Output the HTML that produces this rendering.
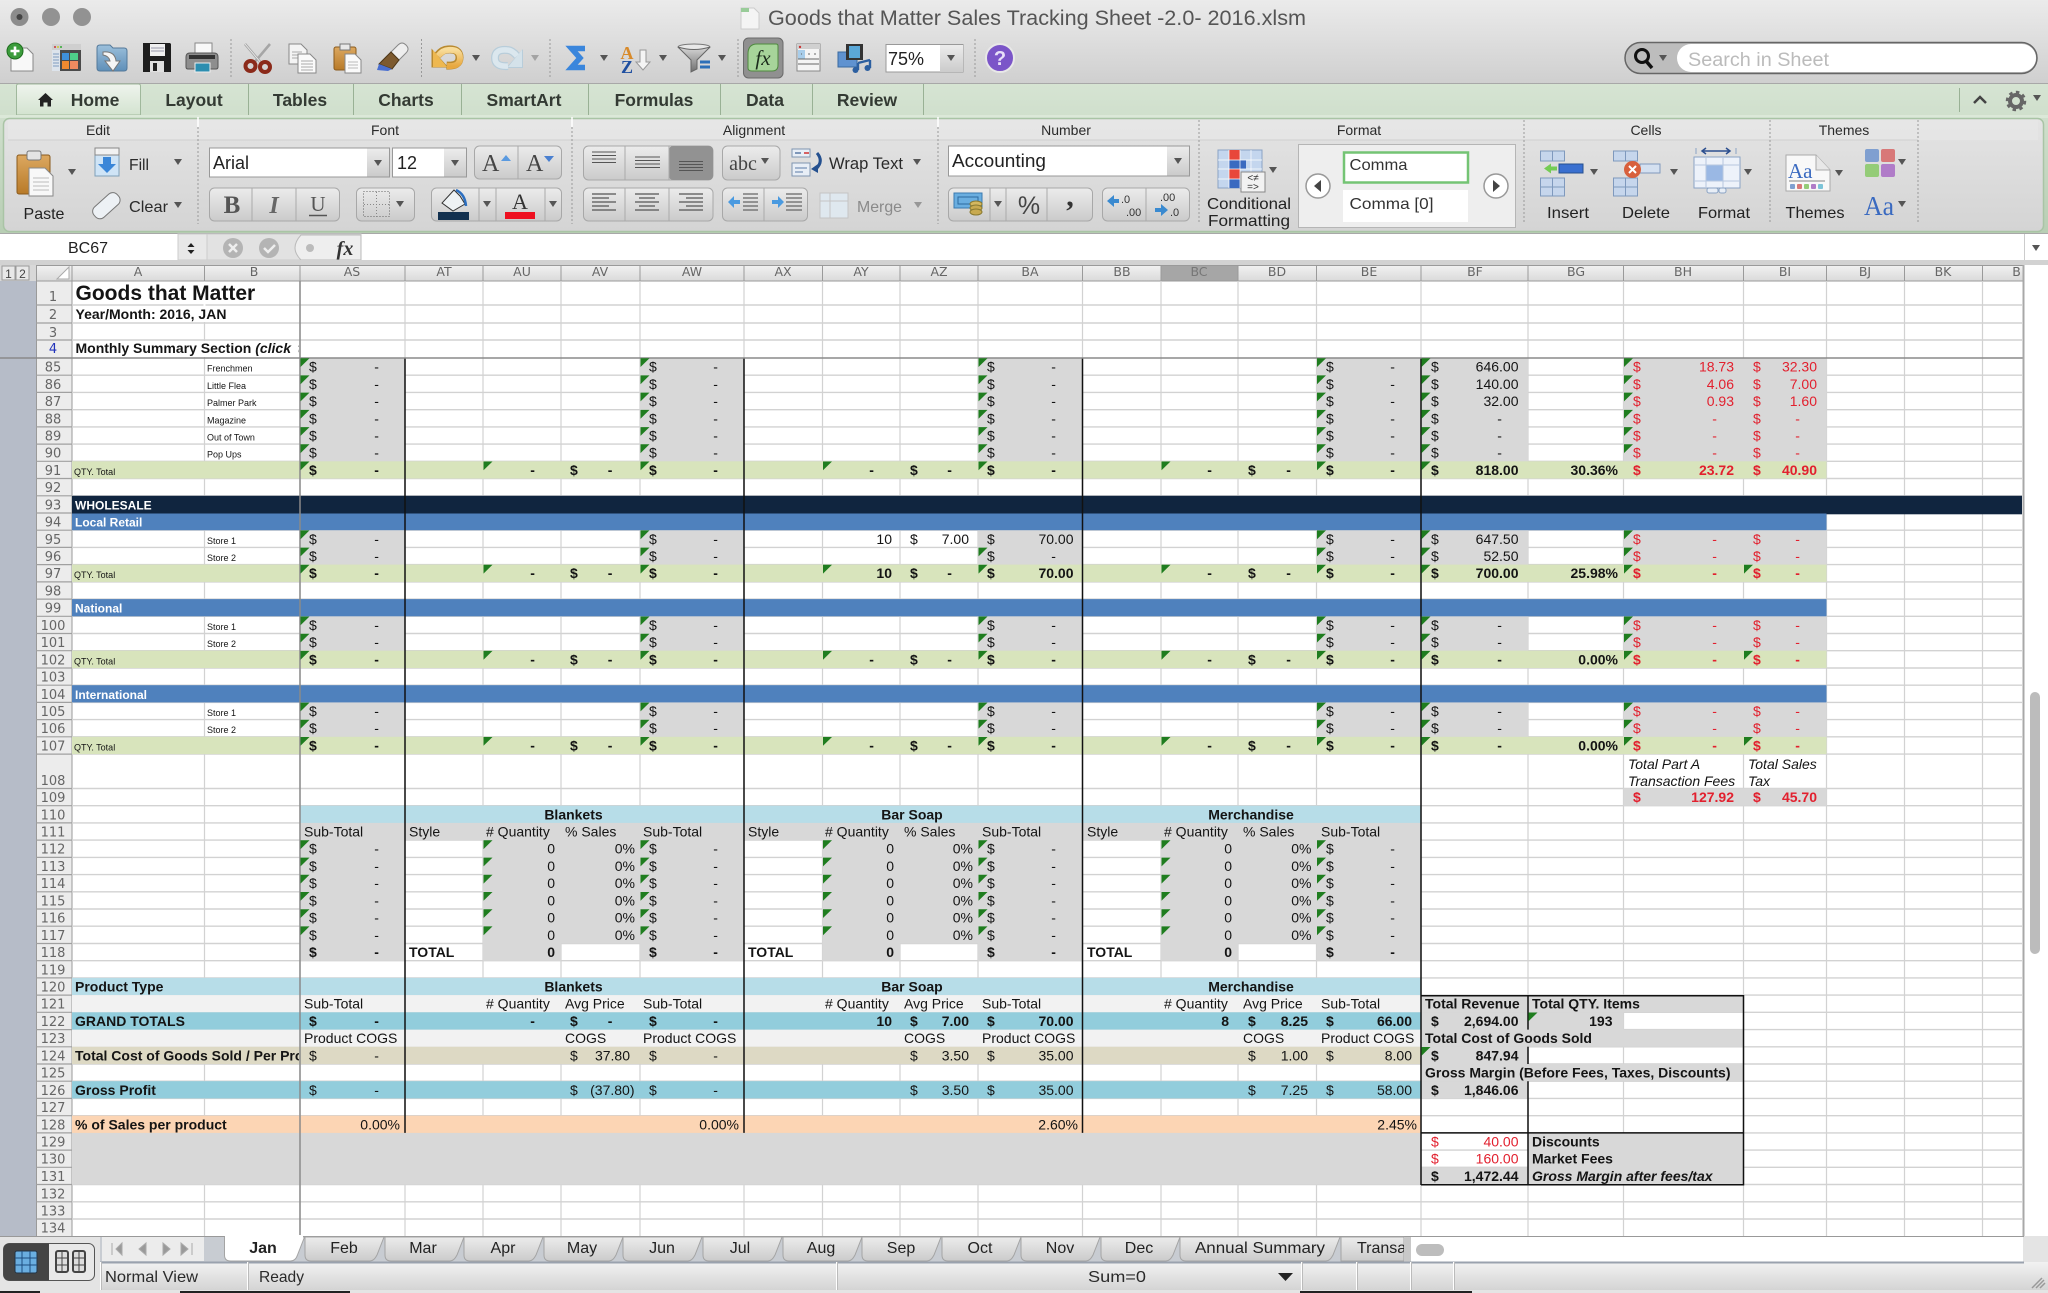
<!DOCTYPE html>
<html lang="en"><head><meta charset="utf-8"><title>Goods that Matter Sales Tracking Sheet</title>
<style>
html,body{margin:0;padding:0;width:2048px;height:1293px;overflow:hidden;background:#fff}
svg{display:block;font:14px "Liberation Sans",Arial,sans-serif;fill:#141414}
.e{text-anchor:end}.m{text-anchor:middle}.b{font-weight:700}.i{font-style:italic}
.r{fill:#e2202e}.s{font-size:9px}.w{fill:#fff;font-weight:700;font-size:12px}
.h{font:13px "DejaVu Sans",sans-serif;fill:#666;text-anchor:middle;font-style:normal}
.c{font:12.5px "DejaVu Sans",sans-serif;fill:#666;text-anchor:middle}
.u{font-size:16px;fill:#2a2a2a}.l{font-size:14px;fill:#2a2a2a;text-anchor:middle}
.tb{font-size:17.5px;font-weight:700;fill:#333a33;text-anchor:middle}
.st{font-size:16px;fill:#222;text-anchor:middle}
.bt{fill:url(#btn);stroke:#a8a8a8}
.ds{stroke:#999;stroke-dasharray:2 2;fill:none}
.gl{stroke:#444;stroke-width:2.5;fill:none}
</style></head><body>
<svg xmlns="http://www.w3.org/2000/svg" width="2048" height="1293" viewBox="0 0 2048 1293">
<defs>
<linearGradient id="top" x1="0" y1="0" x2="0" y2="1"><stop offset="0" stop-color="#ebebeb"/><stop offset="1" stop-color="#cfcfcf"/></linearGradient>
<linearGradient id="tabs" x1="0" y1="0" x2="0" y2="1"><stop offset="0" stop-color="#d6e4d3"/><stop offset="1" stop-color="#b8ceb4"/></linearGradient>
<linearGradient id="home" x1="0" y1="0" x2="0" y2="1"><stop offset="0" stop-color="#eff4ed"/><stop offset="1" stop-color="#d3e3d0"/></linearGradient>
<linearGradient id="rib" x1="0" y1="0" x2="0" y2="1"><stop offset="0" stop-color="#e4e4e4"/><stop offset="1" stop-color="#d4d4d4"/></linearGradient>
<linearGradient id="btn" x1="0" y1="0" x2="0" y2="1"><stop offset="0" stop-color="#ececec"/><stop offset="1" stop-color="#cbcbcb"/></linearGradient>
<linearGradient id="hd" x1="0" y1="0" x2="0" y2="1"><stop offset="0" stop-color="#f2f2f2"/><stop offset="1" stop-color="#dadada"/></linearGradient>
<linearGradient id="sb" x1="0" y1="0" x2="0" y2="1"><stop offset="0" stop-color="#f2f2f2"/><stop offset="1" stop-color="#d4d4d4"/></linearGradient>
<linearGradient id="fun" x1="0" y1="0" x2="0" y2="1"><stop offset="0" stop-color="#d8d8d8"/><stop offset="1" stop-color="#6f6f6f"/></linearGradient>
<linearGradient id="ora" x1="0" y1="0" x2="0" y2="1"><stop offset="0" stop-color="#f8dc9a"/><stop offset="1" stop-color="#e8a840"/></linearGradient>
<linearGradient id="fold" x1="0" y1="0" x2="0" y2="1"><stop offset="0" stop-color="#9cc0dc"/><stop offset="1" stop-color="#5f8fb8"/></linearGradient>
<linearGradient id="cb" x1="0" y1="0" x2="0" y2="1"><stop offset="0" stop-color="#dca860"/><stop offset="1" stop-color="#b87a28"/></linearGradient>
<clipPath id="cA"><rect x="72" y="281" width="227" height="900"/></clipPath>
<clipPath id="cH"><rect x="1982" y="264" width="38" height="18"/></clipPath>
<clipPath id="cT"><rect x="1340" y="1236" width="64" height="28"/></clipPath>
<path id="t" d="M0-13.4h9L0-4.6z" fill="#1f7d1f"/>
<g id="t6"><use href="#t" x="300.5"/><use href="#t" x="640.5"/><use href="#t" x="978.5"/><use href="#t" x="1317"/><use href="#t" x="1421.5"/><use href="#t" x="1624"/></g>
<g id="t8"><use href="#t" x="300.5"/><use href="#t" x="483.5"/><use href="#t" x="640.5"/><use href="#t" x="823"/><use href="#t" x="978.5"/><use href="#t" x="1161.5"/><use href="#t" x="1317"/><use href="#t" x="1421.5"/></g>
<g id="t7"><use href="#t" x="300.5"/><use href="#t" x="483.5"/><use href="#t" x="640.5"/><use href="#t" x="823"/><use href="#t" x="978.5"/><use href="#t" x="1161.5"/><use href="#t" x="1317"/></g>
<path id="dn" d="M-4-3H4L0 3z" fill="#555"/>
<g id="ua"><path d="M447 66q13 1 13-8t-12-8q-5 0-10 6" fill="none" stroke="currentColor" stroke-width="8"/><path d="M432 49v19h17z" fill="currentColor"/></g>
</defs>

<!-- title & toolbar -->
<rect width="2048" height="84" fill="url(#top)"/>
<circle cx="19.5" cy="17" r="9" fill="#8c8c8c"/><circle cx="19.5" cy="17" r="3" fill="#444"/>
<circle cx="51" cy="17" r="9" fill="#929292"/><circle cx="82" cy="17" r="9" fill="#929292"/>
<path d="M741 8h13l5 5v16h-18z" fill="#f4f4f4" stroke="#ccc"/><rect x="741" y="8" width="8" height="4" fill="#9c9"/>
<text x="768" y="25" font-size="21" fill="#555" textLength="538" lengthAdjust="spacingAndGlyphs">Goods that Matter Sales Tracking Sheet -2.0- 2016.xlsm</text>

<!-- new -->
<path d="M11 48h16l6 6v17H11z" fill="#f8f8f8" stroke="#888"/><circle cx="15" cy="51" r="8" fill="#3c9c3c" stroke="#1d6d1d"/><path d="M15 46.500v9M10.500 51h9" stroke="#fff" stroke-width="2.600"/>
<!-- gallery -->
<rect x="52" y="44" width="29" height="27" fill="#4a4a4a" rx="1"/><rect x="52" y="44" width="29" height="6" fill="#cfcfcf"/><circle cx="55" cy="47" r="1" fill="#c33"/><circle cx="58" cy="47" r="1" fill="#cc3"/><circle cx="61" cy="47" r="1" fill="#3a3"/><rect x="52" y="50" width="8" height="21" fill="#dde4ec"/><path d="M53 54h6M53 57h6M53 60h6M53 63h6M53 66h6" stroke="#7e9cc0"/><rect x="62" y="53" width="7" height="7" fill="#3f8fd8"/><rect x="70" y="53" width="8" height="7" fill="#4ed08a"/><rect x="62" y="61" width="7" height="8" fill="#f08a30"/><rect x="70" y="61" width="8" height="8" fill="#ee8a60"/>
<!-- open -->
<path d="M97 48q0-3 3-3h10l3 3h11q3 0 3 3v17q0 3-3 3H100q-3 0-3-3z" fill="url(#fold)" stroke="#54799a"/><path d="M103 52q12-1 13 9h4l-7 10-8-10h5q-1-5-7-6z" fill="#f5f5f5" stroke="#777"/>
<!-- save -->
<path d="M143 43h27l1 1v28h-28z" fill="#1e1e1e"/><rect x="150" y="44" width="15" height="12" fill="#f0f0f0"/><path d="M151 48h13M151 51h13" stroke="#99a"/><rect x="150" y="61" width="14" height="11" fill="#e0e0e0"/><rect x="153" y="63" width="4" height="8" fill="#222"/>
<!-- print -->
<rect x="195" y="43" width="17" height="12" fill="#f8f8f8" stroke="#888"/><path d="M186 57q0-4 4-4h24q4 0 4 4v10q0 2-2 2h-28q-2 0-2-2z" fill="#8e8e8e" stroke="#555"/><rect x="189" y="55" width="26" height="4" fill="#333"/><rect x="195" y="63" width="15" height="9" fill="#2c8eb0" stroke="#eee"/>
<!-- cut -->
<path d="M245 44l17 20M270 44l-17 20" stroke="#a6a6a6" stroke-width="2.600"/><path d="M245 44l17 20" stroke="#eee" stroke-width=".8"/><circle cx="250.500" cy="66" r="5" fill="none" stroke="#8b2a1a" stroke-width="4"/><circle cx="265" cy="67" r="5" fill="none" stroke="#8b2a1a" stroke-width="4"/>
<!-- copy -->
<path d="M289 44h12l6 6v14h-18z" fill="#f4f4f4" stroke="#888"/><path d="M292 52h10M292 55h10M292 58h10" stroke="#aaa"/><path d="M298 54h12l6 6v13h-18z" fill="#fafafa" stroke="#888"/><path d="M301 61h12M301 64h12M301 67h12M301 70h12" stroke="#aaa"/>
<!-- paste -->
<rect x="334" y="47" width="22" height="23" rx="2" fill="url(#cb)" stroke="#8a5a1c"/><rect x="340" y="44" width="10" height="6" fill="#e8e8e8" stroke="#777"/><path d="M345 54h10l6 6v13h-16z" fill="#fafafa" stroke="#888"/><path d="M348 62h10M348 65h10M348 68h10" stroke="#bbb"/>
<!-- brush -->
<path d="M398 45q4-4 8 0t0 8l-7 7-8-8z" fill="#eeeeee" stroke="#888"/><path d="M391 52l8 8-7 9-13-5z" fill="#7d5a2f" stroke="#4d3617"/><path d="M379 64l13 5-4 2-11-1z" fill="#4a6fd0"/>
<!-- undo/redo -->
<g color="#b98a30" transform="translate(-.5 -.5) scale(1)"><use href="#ua"/></g>
<g color="#f0c068"><path d="M447 66q13 1 13-8t-12-8q-5 0-10 6" fill="none" stroke="url(#ora)" stroke-width="6"/><path d="M433 50v17h14z" fill="#eeb850"/></g>
<use href="#dn" x="476" y="58" style="fill:#222"/>
<g color="#b8cdda" transform="translate(955 0) scale(-1 1)"><use href="#ua"/></g>
<g transform="translate(955 0) scale(-1 1)"><path d="M447 66q13 1 13-8t-12-8q-5 0-10 6" fill="none" stroke="#dbe7ee" stroke-width="5.500"/><path d="M433 50v17h14z" fill="#d4e2ea"/></g>
<use href="#dn" x="535" y="58" opacity=".4"/>
<!-- sum -->
<path d="M585 48.500H571.500L580 58 571.500 67.500H585" fill="none" stroke="#3a86dc" stroke-width="5.500"/><use href="#dn" x="604" y="58"/>
<!-- sort -->
<text x="627" y="59" class="m b" font-family="Liberation Serif" font-size="18" fill="#d88a2a">A</text><text x="627" y="73" class="m b" font-family="Liberation Serif" font-size="18" fill="#1f4fa0">Z</text><path d="M640 50h6v12h4l-7 8-7-8h4z" fill="#f4f4f4" stroke="#999"/><use href="#dn" x="663" y="58"/>
<!-- filter -->
<ellipse cx="694" cy="47" rx="16" ry="3" fill="#e8e8e8" stroke="#777"/><path d="M678 47q16 5 32 0l-13 13v9l-6 3V60z" fill="url(#fun)" stroke="#666"/><path d="M700 62h10M700 67h10" stroke="#2c6fb8" stroke-width="3"/><use href="#dn" x="722" y="58"/>
<path class="ds" d="M231 39v39M421.500 39v39M550 39v39M738 39v39M975 39v39"/>
<!-- fx -->
<rect x="743.500" y="38" width="39.500" height="40" rx="5" fill="#909090" stroke="#6a6a6a"/><path d="M757 44h19q2 0 2 2v19q0 6-6 6h-20q-4 0-4-3V54q0-10 9-10z" fill="#a7d49a" stroke="#4f8a3f"/><text x="763" y="65" class="m i" font-family="Liberation Serif" font-size="21" fill="#1c2c1c">fx</text>
<!-- toolbox -->
<rect x="797" y="44" width="23" height="27" fill="#f4f4f4" stroke="#888"/><rect x="797" y="44" width="23" height="5" fill="#d0d0d0"/><circle cx="800" cy="47" r="1.200" fill="#c33"/><rect x="798" y="50" width="7" height="9" fill="#a8cdea"/><path d="M801 54h1M808 54h2M814 54h2M798 59h21M798 64h21" stroke="#666"/>
<!-- media -->
<rect x="838" y="52" width="19" height="15" fill="#5f92d0" stroke="#3a6aa0"/><rect x="846" y="44" width="17" height="16" fill="#333"/><rect x="849" y="46" width="11" height="12" fill="#5aa8d8"/><path d="M858 63v7M870 60v8M858 63l12-3" stroke="#2c5fa0" stroke-width="2.400" fill="none"/><circle cx="855.500" cy="70" r="3" fill="#2c5fa0"/><circle cx="867.500" cy="68" r="3" fill="#2c5fa0"/>
<!-- zoom box -->
<rect x="886" y="44.500" width="77" height="27.500" fill="#fff" stroke="#999"/><rect x="940" y="45" width="23" height="27" fill="url(#btn)"/><use href="#dn" x="951" y="58"/><text x="888" y="65" font-size="18" fill="#222">75%</text>
<!-- help -->
<circle cx="1000" cy="58" r="14" fill="#7b55c8" stroke="#e8e8e8" stroke-width="2"/><text x="1000" y="65" class="m b" font-size="20" fill="#e8e0f8">?</text>
<!-- search -->
<rect x="1625" y="42.500" width="412" height="31" rx="15.500" fill="#bdbdbd" stroke="#666" stroke-width="1.500"/><rect x="1677" y="44" width="359" height="28" rx="14" fill="#fff"/><circle cx="1642" cy="56" r="6.500" fill="none" stroke="#111" stroke-width="3"/><path d="M1646 61l6 7" stroke="#111" stroke-width="3.500"/><use href="#dn" x="1663" y="58"/>
<text x="1688" y="66" font-size="19" fill="#bbb" textLength="141" lengthAdjust="spacingAndGlyphs">Search in Sheet</text>

<!-- ribbon tabs -->
<rect y="83" width="2048" height="150" fill="url(#tabs)"/><path d="M0 83.500H2048" stroke="#a8a8a8"/>
<path d="M16.500 115V86q0-2 2-2h120q2 0 2 2v29z" fill="url(#home)" stroke="#a0b89c"/>
<path d="M38 100l7.500-7 7.500 7h-2v6.500h-3.500v-4h-4v4H40v-6.500z" fill="#222"/>
<text x="95" y="106" class="tb">Home</text><text x="194" y="106" class="tb">Layout</text><text x="300" y="106" class="tb">Tables</text><text x="406" y="106" class="tb">Charts</text><text x="524" y="106" class="tb">SmartArt</text><text x="654" y="106" class="tb">Formulas</text><text x="765" y="106" class="tb">Data</text><text x="867" y="106" class="tb">Review</text>
<path d="M248.500 84v31M353.500 84v31M461.500 84v31M588.500 84v31M720.500 84v31M812.500 84v31M923.500 84v31M1959.500 88v24" stroke="#99b195"/>
<path d="M1974 103l6-6 6 6" class="gl"/>
<circle cx="2016" cy="101" r="6" fill="none" stroke="#666" stroke-width="4"/><circle cx="2016" cy="101" r="9" fill="none" stroke="#666" stroke-width="2.500" stroke-dasharray="3.500 3.500"/><use href="#dn" x="2037" y="98"/>
<rect y="115" width="2048" height="3" fill="#dbe8d8"/>
<rect x="3.500" y="118.500" width="2040" height="113" rx="6" fill="url(#rib)" stroke="#a9c4a5" stroke-width="1.500"/>
<rect x="8" y="120" width="2030" height="20" fill="#e8e8e8" opacity=".6"/><path d="M8 140H1918" stroke="#cfcfcf"/>
<path d="M198 127v97M572 127v97M938 127v97M1199 120v104M1524 120v104M1770 120v104M1918 120v104" class="ds"/>
<path d="M198 117v10M572 117v10M938 117v10" stroke="#fff" stroke-width="1.500"/>
<text x="98" y="135" class="l">Edit</text><text x="385" y="135" class="l">Font</text><text x="754" y="135" class="l">Alignment</text><text x="1066" y="135" class="l">Number</text><text x="1359" y="135" class="l">Format</text><text x="1646" y="135" class="l">Cells</text><text x="1844" y="135" class="l">Themes</text>

<!-- edit -->
<rect x="17" y="155" width="33" height="39" rx="2" fill="url(#cb)" stroke="#8a5a1c"/><rect x="27" y="151" width="14" height="9" rx="2" fill="#e4e4e4" stroke="#777"/><path d="M29 168h16l8 8v20H29z" fill="#f8f8f8" stroke="#888"/><path d="M33 178h16M33 182h16M33 186h16M33 190h16" stroke="#bbb"/>
<use href="#dn" x="72" y="172"/><text x="44" y="219" class="st m">Paste</text>
<rect x="95" y="148" width="24" height="28" fill="#cfe4f6" stroke="#7fa0b8"/><rect x="95" y="148" width="24" height="7" fill="#f2f2f2" stroke="#888"/><path d="M103 157h8v7h5l-9 9-9-9h5z" fill="#3a86d8"/><text x="129" y="170" class="u" textLength="20" lengthAdjust="spacingAndGlyphs">Fill</text><use href="#dn" x="178" y="162"/>
<rect x="91" y="199" width="31" height="14" rx="6" transform="rotate(-42 106 206)" fill="#edf1f5" stroke="#777"/><text x="129" y="212" class="u" textLength="39" lengthAdjust="spacingAndGlyphs">Clear</text><use href="#dn" x="178" y="205"/>
<!-- font -->
<rect x="209.500" y="148" width="180" height="29" fill="#fff" stroke="#999"/><rect x="367" y="148.500" width="22" height="28" fill="url(#btn)"/><use href="#dn" x="378" y="163"/><text x="213" y="169" font-size="18" fill="#222" textLength="36" lengthAdjust="spacingAndGlyphs">Arial</text>
<rect x="392.500" y="148" width="74" height="29" fill="#fff" stroke="#999"/><rect x="444" y="148.500" width="22" height="28" fill="url(#btn)"/><use href="#dn" x="455" y="163"/><text x="397" y="169" font-size="18" fill="#222">12</text>
<rect x="474.500" y="146" width="87" height="33" rx="5" class="bt"/><path d="M518 146v33" stroke="#aaa"/>
<text x="482" y="171" font-family="Liberation Serif" font-size="24" fill="#444">A</text><path d="M501 161l5-6 5 6z" fill="#5a9ae0"/><text x="526" y="171" font-family="Liberation Serif" font-size="24" fill="#444">A</text><path d="M544 156l5 6 5-6z" fill="#4a80d0"/>
<rect x="209.500" y="188" width="130" height="33" rx="5" class="bt"/><path d="M252 188v33M296 188v33" stroke="#aaa"/>
<text x="232" y="213" class="m b" font-family="Liberation Serif" font-size="25" fill="#555">B</text><text x="274" y="213" class="m i b" font-family="Liberation Serif" font-size="24" fill="#666">I</text><text x="318" y="211" class="m" font-family="Liberation Serif" font-size="21" fill="#555">U</text><path d="M309 215.500h18" stroke="#555" stroke-width="1.500"/>
<rect x="356.500" y="188" width="58" height="33" rx="5" class="bt"/><rect x="363.500" y="191.500" width="26" height="25" fill="none" stroke="#666" stroke-dasharray="1 2"/><path d="M376.500 192v25M364 204.500h26" stroke="#888" stroke-dasharray="1 2"/><use href="#dn" x="400" y="204"/>
<rect x="431.500" y="188" width="130" height="33" rx="5" class="bt"/><path d="M479 188v33M496 188v33M545 188v33" stroke="#aaa"/>
<path d="M454 190l6 6 5 8-12 7-11-8z" fill="#eef2f4" stroke="#333"/><path d="M456 190q9 4 10 16" fill="none" stroke="#2c6fc0" stroke-width="2.500"/><rect x="438" y="212" width="31" height="8" fill="#12304f"/><use href="#dn" x="487" y="204"/>
<text x="520" y="209" class="m" font-family="Liberation Serif" font-size="22" fill="#333">A</text><rect x="505" y="212" width="30" height="7" fill="#ee1020"/><use href="#dn" x="553" y="204"/>
<!-- alignment -->
<rect x="583.500" y="146" width="129.500" height="34" rx="5" class="bt"/><rect x="669" y="146" width="44" height="34" rx="4" fill="#929292"/><path d="M625 146v34M669 146v34" stroke="#aaa"/>
<path d="M592 152h24M592 155.500h24M592 159h24M592 162.500h24M635 157h25M635 160.500h25M635 164h25M635 167.500h25M679 161.500h24M679 164.500h24M679 167.500h24M679 170.500h24" stroke="#555"/>
<rect x="722.500" y="146" width="57.500" height="34" rx="5" class="bt"/><text x="743" y="170" class="m" font-family="Liberation Serif" font-size="20" fill="#444">abc</text><use href="#dn" x="765" y="161"/>
<rect x="792" y="149" width="18" height="8" fill="#e8eef6" stroke="#7f95b0"/><rect x="792" y="163" width="18" height="13" fill="#e8eef6" stroke="#7f95b0"/><path d="M795 153h6" stroke="#5a7aa5" stroke-width="1.500"/><path d="M804 153h5" stroke="#d03030" stroke-width="1.500"/><path d="M795 168h12M795 172h8" stroke="#5a7aa5"/><path d="M817 153q7 8-1 16" fill="none" stroke="#24508f" stroke-width="3"/><path d="M811 169l7-5v9z" fill="#24508f"/>
<text x="829" y="169" class="u" font-size="17" style="font-size:17px" textLength="74" lengthAdjust="spacingAndGlyphs">Wrap Text</text><use href="#dn" x="917" y="162"/>
<rect x="583.500" y="188" width="129.500" height="33" rx="5" class="bt"/><path d="M625 188v33M669 188v33" stroke="#aaa"/>
<path d="M592 194h24M592 198h17M592 202h24M592 206h17M592 210h24M635 194h24M639 198h16M635 202h24M639 206h16M635 210h24M679 194h24M686 198h17M679 202h24M686 206h17M679 210h24" stroke="#555" stroke-width="1.300"/>
<rect x="722.500" y="188" width="85" height="33" rx="5" class="bt"/><path d="M764 188v33" stroke="#aaa"/>
<path d="M743 194h15M743 198h15M743 202h15M743 206h15M743 210h15M786 194h16M786 198h16M786 202h16M786 206h16M786 210h16" stroke="#666" stroke-width="1.200"/><path d="M728 202l6-6v4h6v4h-6v4zM784 202l-6-6v4h-6v4h6v4z" fill="#4a9ae0"/>
<rect x="820" y="193" width="28" height="25" fill="#dfe8ef" stroke="#c4c4c4"/><path d="M820 201h28M830 193v25" stroke="#c4c4c4"/>
<text x="857" y="212" style="font-size:16px;fill:#8a8a8a" textLength="45" lengthAdjust="spacingAndGlyphs">Merge</text><use href="#dn" x="918" y="205" opacity=".5"/>
<!-- number -->
<rect x="948.500" y="146" width="241" height="30" fill="#fff" stroke="#999"/><rect x="1167" y="146.500" width="22" height="29" fill="url(#btn)"/><use href="#dn" x="1178" y="161"/><text x="952" y="167" font-size="18" fill="#222" textLength="94" lengthAdjust="spacingAndGlyphs">Accounting</text>
<rect x="948.500" y="188" width="144" height="33" rx="5" class="bt"/><path d="M990 188v33M1006 188v33M1047 188v33" stroke="#aaa"/>
<rect x="954" y="193" width="28" height="15" fill="#6aaee0" stroke="#3a7ab0"/><path d="M958 197h20v7h-20z" fill="none" stroke="#2c6aa0"/><ellipse cx="976" cy="204" rx="6" ry="3" fill="#d4b860" stroke="#8a7a30"/><ellipse cx="976" cy="208" rx="6" ry="3" fill="#c8aa50" stroke="#8a7a30"/><ellipse cx="976" cy="212" rx="6" ry="3" fill="#c8aa50" stroke="#8a7a30"/><use href="#dn" x="998" y="204"/>
<text x="1029" y="214" class="m" font-size="25" fill="#444">%</text><text x="1070" y="206" class="m b" font-family="Liberation Serif" font-size="30" fill="#333">,</text>
<rect x="1102.500" y="188" width="87" height="33" rx="5" class="bt"/><path d="M1146 188v33" stroke="#aaa"/>
<path d="M1107 201l7-6v4h5v4h-5v4z" fill="#3a8ad0"/><text x="1121" y="203" font-size="11" fill="#333">.0</text><text x="1126" y="216" font-size="11" fill="#333">.00</text>
<text x="1160" y="201" font-size="11" fill="#333">.00</text><path d="M1168 210l-7-6v4h-6v4h6v4z" fill="#3a8ad0"/><text x="1170" y="216" font-size="11" fill="#333">.0</text>
<!-- conditional -->
<rect x="1218" y="150" width="44" height="38" fill="#c4d6ee" stroke="#8aa3c4"/><rect x="1229" y="150" width="11" height="10" fill="#e8473a"/><rect x="1229" y="160" width="17" height="9" fill="#3a6ac0"/><rect x="1229" y="169" width="11" height="10" fill="#e8473a"/><rect x="1229" y="179" width="11" height="9" fill="#3a6ac0"/><path d="M1218 160h44M1218 169h44M1218 179h44M1229 150v38M1240 150v38M1251 150v38" stroke="#fff" stroke-width=".7"/>
<rect x="1241" y="172" width="24" height="20" fill="#f2f2f2" stroke="#888"/><text x="1253" y="181" class="m" font-size="10" fill="#333">&lt;≠</text><text x="1253" y="190" class="m" font-size="10" fill="#333">=&gt;</text><use href="#dn" x="1273" y="170"/>
<text x="1249" y="209" class="st" textLength="84" lengthAdjust="spacingAndGlyphs">Conditional</text><text x="1249" y="226" class="st" textLength="82" lengthAdjust="spacingAndGlyphs">Formatting</text>
<!-- format panel -->
<rect x="1298.500" y="144.500" width="217" height="83" fill="#eeeeee" stroke="#b5b5b5"/>
<rect x="1344" y="152.500" width="124" height="30" fill="#fff" stroke="#74c474" stroke-width="2.500"/><rect x="1343" y="190" width="125" height="32" fill="#fff"/>
<text x="1349.500" y="170" font-size="16" fill="#333" textLength="58" lengthAdjust="spacingAndGlyphs">Comma</text><text x="1349.500" y="209" font-size="16" fill="#333" textLength="84" lengthAdjust="spacingAndGlyphs">Comma [0]</text>
<circle cx="1318" cy="186" r="12" fill="#fff" stroke="#999" stroke-width="1.500"/><path d="M1321 180v12l-7-6z" fill="#444"/><circle cx="1496" cy="186" r="12" fill="#fff" stroke="#999" stroke-width="1.500"/><path d="M1493 180v12l7-6z" fill="#444"/>
<!-- cells -->
<g stroke="#7f99bd" fill="#c6d6ec"><rect x="1540.500" y="151" width="24" height="10"/><rect x="1540.500" y="178" width="24" height="18"/><path d="M1552.500 151v10M1552.500 178v18M1540 187h24" fill="none"/></g>
<rect x="1559" y="164" width="24" height="9" fill="#3a70d0" stroke="#27508f"/><path d="M1544 168.500l7-5v3h6v4h-6v3z" fill="#74cc54"/><use href="#dn" x="1594" y="172"/>
<g stroke="#7f99bd" fill="#c6d6ec"><rect x="1613.500" y="151" width="24" height="10"/><rect x="1613.500" y="178" width="24" height="18"/><rect x="1640" y="164" width="20" height="9" fill="#d4e0f0"/><path d="M1625.500 151v10M1625.500 178v18M1613 187h24" fill="none"/></g>
<circle cx="1632.500" cy="169.500" r="8.500" fill="#d8603c"/><path d="M1629 166l7 7m0-7l-7 7" stroke="#fff" stroke-width="2"/><use href="#dn" x="1674" y="172"/>
<rect x="1694" y="157" width="46" height="31" fill="#edf2fa" stroke="#8aa3c4"/><rect x="1706" y="165" width="17" height="16" fill="#9ab8e4"/><path d="M1706 157v31M1723 157v31M1694 165h46M1694 181h46" stroke="#b7c7df"/><rect x="1707" y="188" width="11" height="5" rx="2" fill="#e8eef6" stroke="#8aa3c4"/><rect x="1719" y="188" width="7" height="5" rx="2" fill="#e8eef6" stroke="#8aa3c4"/><path d="M1702 151h28M1706 148l-4 3 4 3M1726 148l4 3-4 3" stroke="#2c4f8f" fill="none" stroke-width="1.500"/><path d="M1696 148v6M1736 148v6" stroke="#8aa3c4"/><use href="#dn" x="1748" y="172"/>
<text x="1568" y="218" class="st" textLength="42" lengthAdjust="spacingAndGlyphs">Insert</text><text x="1646" y="218" class="st" textLength="48" lengthAdjust="spacingAndGlyphs">Delete</text><text x="1724" y="218" class="st" textLength="52" lengthAdjust="spacingAndGlyphs">Format</text>
<!-- themes -->
<path d="M1786 155h30l14 15v21h-44z" fill="#f8f8f8" stroke="#aaa"/><path d="M1816 155v15h14" fill="#e8e8e8" stroke="#aaa"/><text x="1788" y="178" font-family="Liberation Serif" font-size="21" fill="#3a6ac0">Aa</text><path d="M1789 181h36" stroke="#aaa" stroke-width="1.500"/><rect x="1790" y="184" width="5" height="5" rx="1" fill="#7f9fd0"/><rect x="1797" y="184" width="5" height="5" rx="1" fill="#d87878"/><rect x="1804" y="184" width="5" height="5" rx="1" fill="#94cc78"/><rect x="1811" y="184" width="5" height="5" rx="1" fill="#b07cc8"/><rect x="1818" y="184" width="5" height="5" rx="1" fill="#7cc4d8"/><use href="#dn" x="1839" y="173"/>
<text x="1815" y="218" class="st" textLength="59" lengthAdjust="spacingAndGlyphs">Themes</text>
<rect x="1865" y="149" width="14" height="13" rx="2" fill="#7f9fd0"/><rect x="1881" y="149" width="14" height="13" rx="2" fill="#d87878"/><rect x="1865" y="164" width="14" height="13" rx="2" fill="#94cc78"/><rect x="1881" y="164" width="14" height="13" rx="2" fill="#b07cc8"/><use href="#dn" x="1902" y="162"/>
<text x="1864" y="215" font-family="Liberation Serif" font-size="27" fill="#3a6ac0" textLength="30" lengthAdjust="spacingAndGlyphs">Aa</text><use href="#dn" x="1902" y="204"/>

<!-- formula bar -->
<rect y="233" width="2048" height="32" fill="#fff"/><path d="M0 233.500H2048" stroke="#a8a8a8"/>
<rect x="178" y="234" width="29" height="26" fill="#e8e8e8" stroke="#ccc"/><path d="M191 243l-3.500 4h7zM191 254l-3.500-4h7z" fill="#222"/>
<rect x="207" y="234" width="154" height="26" fill="#e2e2e2" stroke="#ccc"/>
<circle cx="233" cy="248" r="10" fill="#b4b4b4"/><path d="M229 244l8 8m0-8l-8 8" stroke="#eee" stroke-width="2.500"/><circle cx="269" cy="248" r="10" fill="#b4b4b4"/><path d="M264 248l4 4 7-7" fill="none" stroke="#eee" stroke-width="2.500"/>
<path d="M301 235q-12 13 0 25h60v-25z" fill="#eeeeee" stroke="#bbb"/><circle cx="310" cy="248" r="4" fill="#bbb"/><text x="345" y="255" class="m i b" font-family="Liberation Serif" font-size="20" fill="#333">fx</text>
<text x="88" y="253" class="m" font-size="16" fill="#222">BC67</text>
<path d="M2024.500 234v26" stroke="#ccc"/><use href="#dn" x="2036" y="248"/>
<rect y="260" width="2048" height="5" fill="#d2d2d2"/>

<!-- sheet background -->
<rect x="0" y="265" width="2048" height="972" fill="#fff"/>
<rect x="0" y="281" width="36" height="956" fill="#b6bcc8"/>
<rect x="0" y="265" width="36" height="16" fill="#d8d8d8"/>
<rect x="2" y="266" width="13" height="14" fill="#e8e8e8" stroke="#999"/><rect x="16" y="266" width="13" height="14" fill="#e8e8e8" stroke="#999"/>
<text x="8.500" y="278" class="m" font-size="12" fill="#444">1</text><text x="22.500" y="278" class="m" font-size="12" fill="#444">2</text>
<rect x="36" y="265" width="1987" height="16" fill="url(#hd)"/>
<rect x="36" y="281" width="36" height="955" fill="#ececec"/>
<rect x="1161" y="265" width="77" height="16" fill="#a6a6a6"/>
<path d="M57 279h12v-12z" fill="#fff" stroke="#aaa"/>
<path d="M36.500 265v971M72 265v971M204.500 265v16M300 265v16M405 265v16M483 265v16M561 265v16M640 265v16M744 265v16M822.500 265v16M900 265v16M978 265v16M1082.500 265v16M1161 265v16M1238 265v16M1316.500 265v16M1421 265v16M1528 265v16M1623.500 265v16M1743.500 265v16M1826.500 265v16M1904.500 265v16M1982.500 265v16M36 265.500H2023M36 281H2023" stroke="#9a9a9a"/>
<g>
<text class="c" x="138" y="276">A</text><text class="c" x="254" y="276">B</text><text class="c" x="352" y="276">AS</text><text class="c" x="444" y="276">AT</text><text class="c" x="522" y="276">AU</text><text class="c" x="600" y="276">AV</text><text class="c" x="692" y="276">AW</text><text class="c" x="783" y="276">AX</text><text class="c" x="861" y="276">AY</text><text class="c" x="939" y="276">AZ</text><text class="c" x="1030" y="276">BA</text><text class="c" x="1122" y="276">BB</text><text class="c" x="1199" y="276" style="fill:#777">BC</text><text class="c" x="1277" y="276">BD</text><text class="c" x="1369" y="276">BE</text><text class="c" x="1475" y="276">BF</text><text class="c" x="1576" y="276">BG</text><text class="c" x="1683" y="276">BH</text><text class="c" x="1785" y="276">BI</text><text class="c" x="1865" y="276">BJ</text><text class="c" x="1943" y="276">BK</text><text class="c" x="2020" y="276" clip-path="url(#cH)">BL</text>
</g>

<!-- grid -->
<path fill="none" stroke="#d2d2d2" stroke-width="1.200" d="M204.500 281V1236M300 281V1236M405 281V1236M483 281V1236M561 281V1236M640 281V1236M744 281V1236M822.500 281V1236M900 281V1236M978 281V1236M1082.500 281V1236M1161 281V1236M1238 281V1236M1316.500 281V1236M1421 281V1236M1528 281V1236M1623.500 281V1236M1743.500 281V1236M1826.500 281V1236M1904.500 281V1236M1982.500 281V1236"/>
<path fill="none" stroke="#d2d2d2" stroke-width="1.400" d="M72 305H2022M72 323H2022M72 340H2022M72 375.200H2022M72 392.400H2022M72 409.700H2022M72 426.900H2022M72 444.100H2022M72 461.300H2022M72 478.500H2022M72 495.800H2022M72 513H2022M72 530.200H2022M72 547.400H2022M72 564.600H2022M72 581.900H2022M72 599.100H2022M72 616.300H2022M72 633.500H2022M72 650.700H2022M72 668H2022M72 685.200H2022M72 702.400H2022M72 719.600H2022M72 736.800H2022M72 754.100H2022M72 788.500H2022M72 805.700H2022M72 822.900H2022M72 840.100H2022M72 857.400H2022M72 874.600H2022M72 891.800H2022M72 909H2022M72 926.200H2022M72 943.500H2022M72 960.700H2022M72 977.900H2022M72 995.100H2022M72 1012.300H2022M72 1029.600H2022M72 1046.800H2022M72 1064H2022M72 1081.200H2022M72 1098.400H2022M72 1115.700H2022M72 1132.900H2022M72 1150.100H2022M72 1167.300H2022M72 1184.500H2022M72 1201.800H2022M72 1219H2022"/>
<path fill="none" stroke="#a0a0a0" stroke-width="1.200" d="M36 305h36M36 323h36M36 340h36M36 375.200h36M36 392.400h36M36 409.700h36M36 426.900h36M36 444.100h36M36 461.300h36M36 478.500h36M36 495.800h36M36 513h36M36 530.200h36M36 547.400h36M36 564.600h36M36 581.900h36M36 599.100h36M36 616.300h36M36 633.500h36M36 650.700h36M36 668h36M36 685.200h36M36 702.400h36M36 719.600h36M36 736.800h36M36 754.100h36M36 788.500h36M36 805.700h36M36 822.900h36M36 840.100h36M36 857.400h36M36 874.600h36M36 891.800h36M36 909h36M36 926.200h36M36 943.500h36M36 960.700h36M36 977.900h36M36 995.100h36M36 1012.300h36M36 1029.600h36M36 1046.800h36M36 1064h36M36 1081.200h36M36 1098.400h36M36 1115.700h36M36 1132.900h36M36 1150.100h36M36 1167.300h36M36 1184.500h36M36 1201.800h36M36 1219h36"/>
<rect x="203.500" y="282" width="2" height="40" fill="#fff"/><rect x="203.500" y="341" width="2" height="16" fill="#fff"/>

<!-- fills -->
<g fill="#d8d8d8">
<rect x="300" y="358" width="105" height="103.300"/><rect x="640" y="358" width="104" height="103.300"/><rect x="978" y="358" width="104.500" height="103.300"/><rect x="1316.500" y="358" width="211.500" height="103.300"/><rect x="1623.500" y="358" width="203" height="103.300"/>
<rect x="300" y="530.200" width="105" height="34.400"/><rect x="640" y="530.200" width="104" height="34.400"/><rect x="978" y="530.200" width="104.500" height="34.400"/><rect x="1316.500" y="530.200" width="211.500" height="34.400"/><rect x="1623.500" y="530.200" width="203" height="34.400"/>
<rect x="300" y="616.300" width="105" height="34.400"/><rect x="640" y="616.300" width="104" height="34.400"/><rect x="978" y="616.300" width="104.500" height="34.400"/><rect x="1316.500" y="616.300" width="211.500" height="34.400"/><rect x="1623.500" y="616.300" width="203" height="34.400"/>
<rect x="300" y="702.400" width="105" height="34.400"/><rect x="640" y="702.400" width="104" height="34.400"/><rect x="978" y="702.400" width="104.500" height="34.400"/><rect x="1316.500" y="702.400" width="211.500" height="34.400"/><rect x="1623.500" y="702.400" width="203" height="34.400"/>
<rect x="1623.500" y="788.500" width="203" height="17.200"/>
<rect x="300" y="822.900" width="1121" height="17.200"/>
<rect x="300" y="840.100" width="105" height="103.400"/><rect x="483" y="840.100" width="261" height="103.400"/><rect x="822.500" y="840.100" width="260" height="103.400"/><rect x="1161" y="840.100" width="260" height="103.400"/>
<rect x="300" y="943.500" width="105" height="17.200"/><rect x="483" y="943.500" width="78" height="17.200"/><rect x="640" y="943.500" width="104" height="17.200"/><rect x="822.500" y="943.500" width="77.500" height="17.200"/><rect x="978" y="943.500" width="104.500" height="17.200"/><rect x="1161" y="943.500" width="77" height="17.200"/><rect x="1316.500" y="943.500" width="104.500" height="17.200"/>
<rect x="72" y="1132.900" width="1349" height="51.600"/>
<rect x="1421" y="995.100" width="322.500" height="17.200"/><rect x="1421" y="1012.300" width="202.500" height="17.300"/><rect x="1421" y="1029.600" width="322.500" height="17.200"/><rect x="1421" y="1046.800" width="107" height="17.200"/><rect x="1421" y="1064" width="322.500" height="17.200"/><rect x="1421" y="1081.200" width="107" height="17.200"/>
<rect x="1528" y="1132.900" width="215.500" height="51.600"/><rect x="1421" y="1167.300" width="107" height="17.200"/>
</g>
<g fill="#d8e4bc"><rect x="72" y="461.300" width="1754.500" height="17.200"/><rect x="72" y="564.600" width="1754.500" height="17.300"/><rect x="72" y="650.700" width="1754.500" height="17.300"/><rect x="72" y="736.800" width="1754.500" height="17.300"/></g>
<rect x="72" y="495.800" width="1950" height="18.500" fill="#10253f"/>
<g fill="#4f81bd"><rect x="72" y="513.500" width="1754.500" height="16.700"/><rect x="72" y="599.100" width="1754.500" height="17.200"/><rect x="72" y="685.200" width="1754.500" height="17.200"/></g>
<g fill="#b7dde8"><rect x="300" y="805.700" width="1121" height="17.200"/><rect x="72" y="977.900" width="1349" height="17.200"/></g>
<g fill="#f2f2f2"><rect x="72" y="995.100" width="1349" height="17.200"/><rect x="72" y="1029.600" width="1349" height="17.200"/></g>
<g fill="#92cddc"><rect x="72" y="1012.300" width="1349" height="17.300"/><rect x="72" y="1081.200" width="1349" height="17.200"/></g>
<rect x="72" y="1046.800" width="1349" height="17.200" fill="#ddd9c4"/>
<rect x="72" y="1115.700" width="1349" height="17.200" fill="#fcd5b4"/>

<!-- borders -->
<path fill="none" stroke="#111" stroke-width="1.500" d="M405 358V1132.900M744 358V1132.900M1082.500 358V1132.900M1421 358V1185M1528 995.500V1029.600M1528 1046.800V1064M1528 1081.200V1185M1421 995.700H1743.500V1184.800H1421M1421 1132.900H1743.500"/>
<path fill="none" stroke="#8a8a8a" stroke-width="1.500" d="M300 281V1236M0 358H2023"/>

<!-- rows 1-4 -->
<text x="75.500" y="300" class="b" font-size="21">Goods that Matter</text>
<text x="75.500" y="319" class="b" font-size="14">Year/Month: 2016, JAN</text>
<text x="75.500" y="353" class="b" clip-path="url(#cA)">Monthly Summary Section <tspan class="i">(click <tspan dx="3">to expand)</tspan></tspan></text>
<text class="h" x="53" y="301">1</text><text class="h" x="53" y="319">2</text><text class="h" x="53" y="337">3</text><text class="h b" x="53" y="353" style="fill:#2233bb">4</text>

<g transform="translate(0 371.600)"><text class="h" x="53">85</text><text class="s" x="207">Frenchmen</text><use href="#t6"/><text x="309 649 987 1326 1431">$$$$$</text><text x="374.300 713.300 1051.300 1390.300">----</text><text class="e" x="1518.500">646.00</text><text x="1633 1753" class="r">$$</text><text class="e r" x="1734">18.73</text><text class="e r" x="1817">32.30</text></g>
<g transform="translate(0 388.800)"><text class="h" x="53">86</text><text class="s" x="207">Little Flea</text><use href="#t6"/><text x="309 649 987 1326 1431">$$$$$</text><text x="374.300 713.300 1051.300 1390.300">----</text><text class="e" x="1518.500">140.00</text><text x="1633 1753" class="r">$$</text><text class="e r" x="1734">4.06</text><text class="e r" x="1817">7.00</text></g>
<g transform="translate(0 406)"><text class="h" x="53">87</text><text class="s" x="207">Palmer Park</text><use href="#t6"/><text x="309 649 987 1326 1431">$$$$$</text><text x="374.300 713.300 1051.300 1390.300">----</text><text class="e" x="1518.500">32.00</text><text x="1633 1753" class="r">$$</text><text class="e r" x="1734">0.93</text><text class="e r" x="1817">1.60</text></g>
<g transform="translate(0 423.300)"><text class="h" x="53">88</text><text class="s" x="207">Magazine</text><use href="#t6"/><text x="309 649 987 1326 1431">$$$$$</text><text x="374.300 713.300 1051.300 1390.300 1497.300">-----</text><text x="1633 1753" class="r">$$</text><text x="1712.300 1795.300" class="r">--</text></g>
<g transform="translate(0 440.500)"><text class="h" x="53">89</text><text class="s" x="207">Out of Town</text><use href="#t6"/><text x="309 649 987 1326 1431">$$$$$</text><text x="374.300 713.300 1051.300 1390.300 1497.300">-----</text><text x="1633 1753" class="r">$$</text><text x="1712.300 1795.300" class="r">--</text></g>
<g transform="translate(0 457.700)"><text class="h" x="53">90</text><text class="s" x="207">Pop Ups</text><use href="#t6"/><text x="309 649 987 1326 1431">$$$$$</text><text x="374.300 713.300 1051.300 1390.300 1497.300">-----</text><text x="1633 1753" class="r">$$</text><text x="1712.300 1795.300" class="r">--</text></g>
<g transform="translate(0 474.900)"><text class="h" x="53">91</text><text class="s" x="74">QTY. Total</text><use href="#t8"/><g class="b"><text x="309 570 649 910 987 1248 1326 1431">$$$$$$$$</text><text x="374.300 530.300 607.800 713.300 869.300 947.300 1051.300 1207.300 1286.300 1390.300">----------</text><text class="e" x="1518.500">818.00</text><text class="e" x="1618">30.36%</text><text x="1633 1753" class="r">$$</text><text class="e r" x="1734">23.72</text><text class="e r" x="1817">40.90</text></g></g>
<text class="h" x="53" y="492">92</text>
<g transform="translate(0 509.400)"><text class="h" x="53">93</text><text class="w" x="75">WHOLESALE</text></g>
<g transform="translate(0 526.600)"><text class="h" x="53">94</text><text class="w" x="75">Local Retail</text></g>
<g transform="translate(0 543.800)"><text class="h" x="53">95</text><text class="s" x="207">Store 1</text><use href="#t"  x="300.5"/><use href="#t" x="640.5"/><use href="#t" x="1317"/><use href="#t" x="1421.5"/><use href="#t" x="1624"/><text x="309 649 910 987 1326 1431">$$$$$$</text><text x="374.300 713.300 1390.300">---</text><text class="e" x="892">10</text><text class="e" x="969">7.00</text><text class="e" x="1073.500">70.00</text><text class="e" x="1518.500">647.50</text><text x="1633 1753" class="r">$$</text><text x="1712.300 1795.300" class="r">--</text></g>
<g transform="translate(0 561)"><text class="h" x="53">96</text><text class="s" x="207">Store 2</text><use href="#t6"/><text x="309 649 987 1326 1431">$$$$$</text><text x="374.300 713.300 1051.300 1390.300">----</text><text class="e" x="1518.500">52.50</text><text x="1633 1753" class="r">$$</text><text x="1712.300 1795.300" class="r">--</text></g>
<g transform="translate(0 578.200)"><text class="h" x="53">97</text><text class="s" x="74">QTY. Total</text><use href="#t8"/><use href="#t" x="1624"/><use href="#t" x="1744"/><g class="b"><text x="309 570 649 910 987 1248 1326 1431">$$$$$$$$</text><text x="374.300 530.300 607.800 713.300 947.300 1207.300 1286.300 1390.300">--------</text><text class="e" x="892">10</text><text class="e" x="1073.500">70.00</text><text class="e" x="1518.500">700.00</text><text class="e" x="1618">25.98%</text><text x="1633 1753" class="r">$$</text><text x="1712.300 1795.300" class="r">--</text></g></g>
<text class="h" x="53" y="595.500">98</text>
<g transform="translate(0 612.700)"><text class="h" x="53">99</text><text class="w" x="75">National</text></g>
<g transform="translate(0 629.900)"><text class="h" x="53">100</text><text class="s" x="207">Store 1</text><use href="#t6"/><text x="309 649 987 1326 1431">$$$$$</text><text x="374.300 713.300 1051.300 1390.300 1497.300">-----</text><text x="1633 1753" class="r">$$</text><text x="1712.300 1795.300" class="r">--</text></g>
<g transform="translate(0 647.100)"><text class="h" x="53">101</text><text class="s" x="207">Store 2</text><use href="#t6"/><text x="309 649 987 1326 1431">$$$$$</text><text x="374.300 713.300 1051.300 1390.300 1497.300">-----</text><text x="1633 1753" class="r">$$</text><text x="1712.300 1795.300" class="r">--</text></g>
<g transform="translate(0 664.300)"><text class="h" x="53">102</text><text class="s" x="74">QTY. Total</text><use href="#t8"/><use href="#t" x="1624"/><use href="#t" x="1744"/><g class="b"><text x="309 570 649 910 987 1248 1326 1431">$$$$$$$$</text><text x="374.300 530.300 607.800 713.300 869.300 947.300 1051.300 1207.300 1286.300 1390.300 1497.300">-----------</text><text class="e" x="1618">0.00%</text><text x="1633 1753" class="r">$$</text><text x="1712.300 1795.300" class="r">--</text></g></g>
<text class="h" x="53" y="681.500">103</text>
<g transform="translate(0 698.800)"><text class="h" x="53">104</text><text class="w" x="75">International</text></g>
<g transform="translate(0 716)"><text class="h" x="53">105</text><text class="s" x="207">Store 1</text><use href="#t6"/><text x="309 649 987 1326 1431">$$$$$</text><text x="374.300 713.300 1051.300 1390.300 1497.300">-----</text><text x="1633 1753" class="r">$$</text><text x="1712.300 1795.300" class="r">--</text></g>
<g transform="translate(0 733.200)"><text class="h" x="53">106</text><text class="s" x="207">Store 2</text><use href="#t6"/><text x="309 649 987 1326 1431">$$$$$</text><text x="374.300 713.300 1051.300 1390.300 1497.300">-----</text><text x="1633 1753" class="r">$$</text><text x="1712.300 1795.300" class="r">--</text></g>
<g transform="translate(0 750.400)"><text class="h" x="53">107</text><text class="s" x="74">QTY. Total</text><use href="#t8"/><use href="#t" x="1624"/><use href="#t" x="1744"/><g class="b"><text x="309 570 649 910 987 1248 1326 1431">$$$$$$$$</text><text x="374.300 530.300 607.800 713.300 869.300 947.300 1051.300 1207.300 1286.300 1390.300 1497.300">-----------</text><text class="e" x="1618">0.00%</text><text x="1633 1753" class="r">$$</text><text x="1712.300 1795.300" class="r">--</text></g></g>
<text class="h" x="53" y="785">108</text>
<text class="i" x="1628" y="769">Total Part A</text><text class="i" x="1628" y="786">Transaction Fees</text><text class="i" x="1748" y="769">Total Sales</text><text class="i" x="1748" y="786">Tax</text>
<g transform="translate(0 802.100)"><text class="h" x="53">109</text><g class="b"><text x="1633 1753" class="r">$$</text><text class="e r" x="1734">127.92</text><text class="e r" x="1817">45.70</text></g></g>
<g transform="translate(0 819.300)"><text class="h" x="53">110</text><g class="b"><text class="m" x="573.500">Blankets</text><text class="m" x="912">Bar Soap</text><text class="m" x="1251">Merchandise</text></g></g>
<g transform="translate(0 836.500)"><text class="h" x="53">111</text><text x="304">Sub-Total</text><text x="409">Style</text><text x="486"># Quantity</text><text x="565">% Sales</text><text x="643">Sub-Total</text><text x="748">Style</text><text x="825"># Quantity</text><text x="904">% Sales</text><text x="982">Sub-Total</text><text x="1087">Style</text><text x="1164"># Quantity</text><text x="1243">% Sales</text><text x="1321">Sub-Total</text></g>
<g transform="translate(0 853.700)"><text class="h" x="53">112</text><use href="#t7"/><text x="309 649 987 1326">$$$$</text><text x="374.300 713.300 1051.300 1390.300">----</text><text class="e" x="555">0</text><text class="e" x="635">0%</text><text class="e" x="894">0</text><text class="e" x="973">0%</text><text class="e" x="1232">0</text><text class="e" x="1311.500">0%</text></g>
<g transform="translate(0 871)"><text class="h" x="53">113</text><use href="#t7"/><text x="309 649 987 1326">$$$$</text><text x="374.300 713.300 1051.300 1390.300">----</text><text class="e" x="555">0</text><text class="e" x="635">0%</text><text class="e" x="894">0</text><text class="e" x="973">0%</text><text class="e" x="1232">0</text><text class="e" x="1311.500">0%</text></g>
<g transform="translate(0 888.200)"><text class="h" x="53">114</text><use href="#t7"/><text x="309 649 987 1326">$$$$</text><text x="374.300 713.300 1051.300 1390.300">----</text><text class="e" x="555">0</text><text class="e" x="635">0%</text><text class="e" x="894">0</text><text class="e" x="973">0%</text><text class="e" x="1232">0</text><text class="e" x="1311.500">0%</text></g>
<g transform="translate(0 905.400)"><text class="h" x="53">115</text><use href="#t7"/><text x="309 649 987 1326">$$$$</text><text x="374.300 713.300 1051.300 1390.300">----</text><text class="e" x="555">0</text><text class="e" x="635">0%</text><text class="e" x="894">0</text><text class="e" x="973">0%</text><text class="e" x="1232">0</text><text class="e" x="1311.500">0%</text></g>
<g transform="translate(0 922.600)"><text class="h" x="53">116</text><use href="#t7"/><text x="309 649 987 1326">$$$$</text><text x="374.300 713.300 1051.300 1390.300">----</text><text class="e" x="555">0</text><text class="e" x="635">0%</text><text class="e" x="894">0</text><text class="e" x="973">0%</text><text class="e" x="1232">0</text><text class="e" x="1311.500">0%</text></g>
<g transform="translate(0 939.800)"><text class="h" x="53">117</text><use href="#t7"/><text x="309 649 987 1326">$$$$</text><text x="374.300 713.300 1051.300 1390.300">----</text><text class="e" x="555">0</text><text class="e" x="635">0%</text><text class="e" x="894">0</text><text class="e" x="973">0%</text><text class="e" x="1232">0</text><text class="e" x="1311.500">0%</text></g>
<g transform="translate(0 957.100)"><text class="h" x="53">118</text><g class="b"><text x="309 649 987 1326">$$$$</text><text x="374.300 713.300 1051.300 1390.300">----</text><text x="409">TOTAL</text><text x="748">TOTAL</text><text x="1087">TOTAL</text><text class="e" x="555">0</text><text class="e" x="894">0</text><text class="e" x="1232">0</text></g></g>
<text class="h" x="53" y="974.500">119</text>
<g transform="translate(0 991.500)"><text class="h" x="53">120</text><g class="b"><text x="75">Product Type</text><text class="m" x="573.500">Blankets</text><text class="m" x="912">Bar Soap</text><text class="m" x="1251">Merchandise</text></g></g>
<g transform="translate(0 1008.700)"><text class="h" x="53">121</text><text x="304">Sub-Total</text><text x="486"># Quantity</text><text x="565">Avg Price</text><text x="643">Sub-Total</text><text x="825"># Quantity</text><text x="904">Avg Price</text><text x="982">Sub-Total</text><text x="1164"># Quantity</text><text x="1243">Avg Price</text><text x="1321">Sub-Total</text><g class="b"><text x="1425">Total Revenue</text><text x="1532">Total QTY. Items</text></g></g>
<g transform="translate(0 1025.900)"><text class="h" x="53">122</text><use href="#t" x="1528.5"/><g class="b"><text x="75">GRAND TOTALS</text><text x="309 570 649 910 987 1248 1326 1431">$$$$$$$$</text><text x="374.300 530.300 607.800 713.300">----</text><text class="e" x="892">10</text><text class="e" x="969">7.00</text><text class="e" x="1073.500">70.00</text><text class="e" x="1229">8</text><text class="e" x="1308">8.25</text><text class="e" x="1412">66.00</text><text class="e" x="1518.500">2,694.00</text><text class="e" x="1612.500">193</text></g></g>
<g transform="translate(0 1043.200)"><text class="h" x="53">123</text><text x="304">Product COGS</text><text x="565">COGS</text><text x="643">Product COGS</text><text x="904">COGS</text><text x="982">Product COGS</text><text x="1243">COGS</text><text x="1321">Product COGS</text><text class="b" x="1425">Total Cost of Goods Sold</text></g>
<text class="b" x="75" y="1060.400" clip-path="url(#cA)">Total Cost of Goods Sold / Per Product</text>
<g transform="translate(0 1060.400)"><text class="h" x="53">124</text><use href="#t" x="1421.5"/><text x="309 570 649 910 987 1248 1326">$$$$$$$</text><text x="374.300 713.300">--</text><text class="e" x="630">37.80</text><text class="e" x="969">3.50</text><text class="e" x="1073.500">35.00</text><text class="e" x="1308">1.00</text><text class="e" x="1412">8.00</text><g class="b"><text x="1431">$</text><text class="e" x="1518.500">847.94</text></g></g>
<g transform="translate(0 1077.600)"><text class="h" x="53">125</text><text class="b" x="1425">Gross Margin (Before Fees, Taxes, Discounts)</text></g>
<g transform="translate(0 1094.800)"><text class="h" x="53">126</text><text class="b" x="75">Gross Profit</text><text x="309 570 649 910 987 1248 1326">$$$$$$$</text><text x="374.300 713.300">--</text><text class="e" x="634.500">(37.80)</text><text class="e" x="969">3.50</text><text class="e" x="1073.500">35.00</text><text class="e" x="1308">7.25</text><text class="e" x="1412">58.00</text><g class="b"><text x="1431">$</text><text class="e" x="1518.500">1,846.06</text></g></g>
<text class="h" x="53" y="1112">127</text>
<g transform="translate(0 1129.300)"><text class="h" x="53">128</text><text class="b" x="75">% of Sales per product</text><text class="e" x="400">0.00%</text><text class="e" x="739">0.00%</text><text class="e" x="1078">2.60%</text><text class="e" x="1417">2.45%</text></g>
<g transform="translate(0 1146.500)"><text class="h" x="53">129</text><text x="1431" class="r">$</text><text class="e r" x="1518.500">40.00</text><text class="b" x="1532">Discounts</text></g>
<g transform="translate(0 1163.700)"><text class="h" x="53">130</text><text x="1431" class="r">$</text><text class="e r" x="1518.500">160.00</text><text class="b" x="1532">Market Fees</text></g>
<g transform="translate(0 1180.900)"><text class="h" x="53">131</text><g class="b"><text x="1431">$</text><text class="e" x="1518.500">1,472.44</text><text class="i" x="1532">Gross Margin after fees/tax</text></g></g>
<text class="h" x="53" y="1198.500">132</text><text class="h" x="53" y="1215.500">133</text><text class="h" x="53" y="1232.500">134</text>

<!-- right scrollbar -->
<rect x="2023" y="265" width="25" height="972" fill="#fff"/><path d="M2023.500 265V1236" stroke="#a8a8a8" stroke-width="2"/>
<rect x="2030" y="692" width="10" height="262" rx="5" fill="#bcbcbc"/>

<!-- tabs / status -->
<rect x="0" y="1236" width="2048" height="57" fill="#e4e4e4"/>
<path d="M0 1236.500H2024" stroke="#999"/>
<rect x="100" y="1237" width="1311" height="25" fill="#c8ccd2"/>
<rect x="102" y="1237" width="102" height="24" fill="#ececec"/>
<path d="M112 1243v12M122 1243l-6 6 6 6zM146 1243l-7 6 7 6zM163 1243l7 6-7 6zM181 1243l7 6-7 6zM192 1243v12" stroke="#aaa" fill="#9a9a9a"/>
<rect x="3.500" y="1243.500" width="91" height="37" rx="6" fill="#e8e8e8" stroke="#555"/><path d="M3.500 1249.500q0-6 6-6H49v37H9.500q-6 0-6-6z" fill="#444"/>
<rect x="15" y="1251" width="22" height="22" rx="2" fill="#6aaee0" stroke="#234"/><path d="M15 1258h22M15 1265h22M22 1251v22M30 1251v22" stroke="#1d4d80"/>
<rect x="56" y="1251" width="12" height="21" rx="2" fill="#ddd" stroke="#444" stroke-width="2"/><rect x="73" y="1251" width="12" height="21" rx="2" fill="#ddd" stroke="#444" stroke-width="2"/><path d="M62 1252v19M79 1252v19M57 1258h10M57 1265h10M74 1258h10M74 1265h10" stroke="#444"/>
<g fill="url(#btn)" stroke="#a4a4a4">
<path d="M1341 1237v24h63v-24z"/>
<path d="M1180 1237v18q0 6 6 6h140q4 0 7-6l7-18z"/>
<path d="M1101 1237v18q0 6 6 6h59q4 0 7-6l7-18z"/>
<path d="M1021 1237v18q0 6 6 6h59q4 0 7-6l7-18z"/>
<path d="M942 1237v18q0 6 6 6h59q4 0 7-6l7-18z"/>
<path d="M862 1237v18q0 6 6 6h59q4 0 7-6l7-18z"/>
<path d="M783 1237v18q0 6 6 6h59q4 0 7-6l7-18z"/>
<path d="M703 1237v18q0 6 6 6h59q4 0 7-6l7-18z"/>
<path d="M623 1237v18q0 6 6 6h59q4 0 7-6l7-18z"/>
<path d="M544 1237v18q0 6 6 6h59q4 0 7-6l7-18z"/>
<path d="M464 1237v18q0 6 6 6h59q4 0 7-6l7-18z"/>
<path d="M385 1237v18q0 6 6 6h59q4 0 7-6l7-18z"/>
<path d="M305 1237v18q0 6 6 6h59q4 0 7-6l7-18z"/>
</g>
<path d="M224.500 1237v18q0 6 6 6h60q5 0 7-6l7-18z" fill="#fff" stroke="#a4a4a4"/>
<rect x="225" y="1235" width="78" height="3" fill="#fff"/>
<text class="st b" x="263" y="1253">Jan</text><text class="st" x="344" y="1253">Feb</text><text class="st" x="423" y="1253">Mar</text><text class="st" x="503" y="1253">Apr</text><text class="st" x="582" y="1253">May</text><text class="st" x="662" y="1253">Jun</text><text class="st" x="740" y="1253">Jul</text><text class="st" x="821" y="1253">Aug</text><text class="st" x="901" y="1253">Sep</text><text class="st" x="980" y="1253">Oct</text><text class="st" x="1060" y="1253">Nov</text><text class="st" x="1139" y="1253">Dec</text><text class="st" x="1260" y="1253" textLength="130" lengthAdjust="spacingAndGlyphs">Annual Summary</text>
<text class="st" x="1357" y="1253" clip-path="url(#cT)" style="text-anchor:start">Transactions</text>
<rect x="1404" y="1237" width="7" height="25" fill="#c8c8c8"/><rect x="1411" y="1237" width="612" height="25" fill="#fff"/>
<rect x="1416" y="1244" width="28" height="12" rx="6" fill="#bdbdbd"/>
<rect x="100" y="1262" width="1948" height="28" fill="url(#sb)"/><path d="M100 1262.500H2024" stroke="#9aa2ae" stroke-width="2"/>
<path d="M100.500 1262v28M247.500 1262v28M836.500 1262v28M1301.500 1262v28M1356.500 1262v28M1410.500 1262v28M1453.500 1262v28" stroke="#fff"/>
<path d="M101.500 1262v28M248.500 1262v28M837.500 1262v28M1302.500 1262v28M1357.500 1262v28M1411.500 1262v28M1454.500 1262v28" stroke="#bbb"/>
<text x="105" y="1282" class="u" textLength="93" lengthAdjust="spacingAndGlyphs">Normal View</text><text x="259" y="1282" class="u" textLength="45" lengthAdjust="spacingAndGlyphs">Ready</text><text x="1088" y="1282" class="u" textLength="58" lengthAdjust="spacingAndGlyphs">Sum=0</text>
<path d="M1278 1273h15l-7.500 8z" fill="#222"/>
<path d="M2032 1288l10-10M2036 1288l8-8M2040 1288l5-5" stroke="#999" stroke-width="1.500"/>
<rect x="0" y="1291" width="40" height="2" fill="#222"/><rect x="180" y="1291" width="170" height="2" fill="#222"/><rect x="1300" y="1291" width="172" height="2" fill="#222"/>
</svg>
</body></html>
